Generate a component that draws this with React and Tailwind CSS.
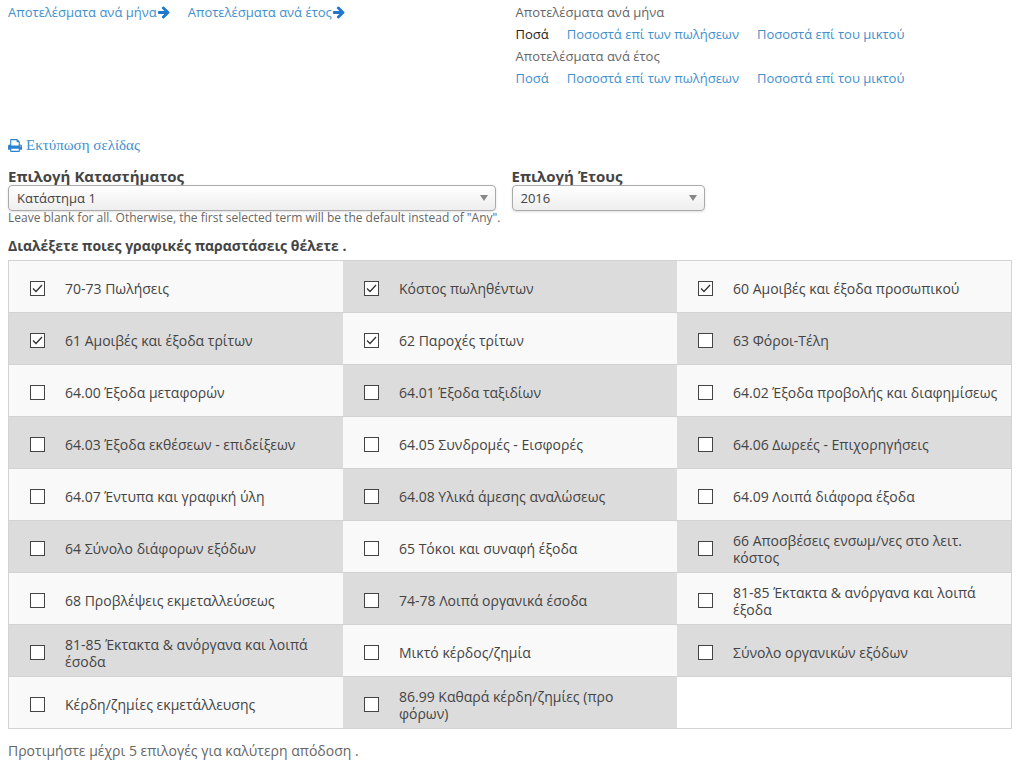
import { useCallback, useState } from "react";

const CHARTS = [
  "70-73 Πωλήσεις",
  "Κόστος πωληθέντων",
  "60 Αμοιβές και έξοδα προσωπικού",
  "61 Αμοιβές και έξοδα τρίτων",
  "62 Παροχές τρίτων",
  "63 Φόροι-Τέλη",
  "64.00 Έξοδα μεταφορών",
  "64.01 Έξοδα ταξιδίων",
  "64.02 Έξοδα προβολής και διαφημίσεως",
  "64.03 Έξοδα εκθέσεων - επιδείξεων",
  "64.05 Συνδρομές - Εισφορές",
  "64.06 Δωρεές - Επιχορηγήσεις",
  "64.07 Έντυπα και γραφική ύλη",
  "64.08 Υλικά άμεσης αναλώσεως",
  "64.09 Λοιπά διάφορα έξοδα",
  "64 Σύνολο διάφορων εξόδων",
  "65 Τόκοι και συναφή έξοδα",
  "66 Αποσβέσεις ενσωμ/νες στο λειτ. κόστος",
  "68 Προβλέψεις εκμεταλλεύσεως",
  "74-78 Λοιπά οργανικά έσοδα",
  "81-85 Έκτακτα & ανόργανα και λοιπά έξοδα",
  "81-85 Έκτακτα & ανόργανα και λοιπά έσοδα",
  "Μικτό κέρδος/ζημία",
  "Σύνολο οργανικών εξόδων",
  "Κέρδη/ζημίες εκμετάλλευσης",
  "86.99 Καθαρά κέρδη/ζημίες (προ\nφόρων)",
];

const MODES = ["Ποσά", "Ποσοστά επί των πωλήσεων", "Ποσοστά επί του μικτού"];

function ArrowRight() {
  return (
    <svg viewBox="0 0 1536 1792" className="h-[14px] w-3 fill-[#1f78cc]" aria-hidden="true">
      <path d="M1472 960q0 54-37 91l-651 651q-39 37-91 37-51 0-90-37l-75-75q-38-38-38-91t38-91l293-293h-704q-52 0-84.5-37.5t-32.5-90.5v-128q0-53 32.5-90.5t84.5-37.5h704l-293-294q-38-36-38-90t38-90l75-75q38-38 90-38 53 0 91 38l651 651q37 35 37 90z" />
    </svg>
  );
}

function PrintIcon() {
  return (
    <svg viewBox="0 0 1664 1792" className="h-[15px] w-[14px] fill-[#2b82d0]" aria-hidden="true">
      <path d="M384 1536h896v-256h-896v256zM384 896h896v-384h-160q-40 0-68-28t-28-68v-160h-640v640zM1536 960q0-26-19-45t-45-19-45 19-19 45 19 45 45 19 45-19 19-45zM1664 960v416q0 13-9.5 22.5t-22.5 9.5h-224v160q0 40-28 68t-68 28h-960q-40 0-68-28t-28-68v-160h-224q-13 0-22.5-9.5t-9.5-22.5v-416q0-79 56.5-135.5t135.5-56.5h64v-544q0-40 28-68t68-28h672q40 0 88 20t76 48l152 152q28 28 48 76t20 88v256h64q79 0 135.5 56.5t56.5 135.5z" />
    </svg>
  );
}

function ModeLinks({ active }) {
  return (
    <nav className="flex gap-[18px]">
      {MODES.map((m) => (
        <a key={m} href="#" className={m === active ? "text-[#222222]" : "text-[#428fce]"}>
          {m}
        </a>
      ))}
    </nav>
  );
}

function SelectField({ id, label, options, className }) {
  return (
    <div className={className}>
      <label htmlFor={id} className="block text-[15px] leading-[18px] font-bold text-[#444444]">
        {label}
      </label>
      <div className="relative">
        <select
          id={id}
          className="block h-[26px] w-full appearance-none rounded border border-[#aaaaaa] bg-linear-to-b from-white to-[#eeeeee] px-2 pt-px text-[13px] text-[#444444] shadow-sm"
        >
          {options.map((o) => (
            <option key={o}>{o}</option>
          ))}
        </select>
        <svg viewBox="0 0 8 6" className="pointer-events-none absolute top-[10px] right-2 h-[6px] w-2 fill-[#888888]" aria-hidden="true">
          <path d="M0 0h8L4 6z" />
        </svg>
      </div>
    </div>
  );
}

export default function App() {
  const [selected, setSelected] = useState([0, 1, 2, 3, 4]);

  const toggle = useCallback((i) => {
    setSelected((s) => (s.includes(i) ? s.filter((v) => v !== i) : [...s, i]));
  }, []);

  return (
    <main className="bg-white px-2 font-['Open_Sans','Noto_Sans',sans-serif] text-[13px] text-[#666666]">
      <header className="flex pt-px leading-[22px]">
        <div className="flex w-1/2 items-start gap-[18px]">
          <a href="#" className="flex items-center gap-px text-[#428fce]">
            Αποτελέσματα ανά μήνα <ArrowRight />
          </a>
          <a href="#" className="flex items-center gap-px text-[#428fce]">
            Αποτελέσματα ανά έτος <ArrowRight />
          </a>
        </div>
        <div className="w-1/2 pl-1">
          <p>Αποτελέσματα ανά μήνα</p>
          <ModeLinks active="Ποσά" />
          <p>Αποτελέσματα ανά έτος</p>
          <ModeLinks />
        </div>
      </header>

      <a href="#" className="mt-11 flex items-center gap-1 font-['Liberation_Serif',serif] text-[15px] leading-6 text-[#428fce]">
        <PrintIcon />
        Εκτύπωση σελίδας
      </a>

      <div className="mt-[10px] flex">
        <div className="w-1/2">
          <SelectField id="store" label="Επιλογή Καταστήματος" options={["Κατάστημα 1"]} className="pr-4" />
          <p className="text-[12px] leading-[14px]">
            Leave blank for all. Otherwise, the first selected term will be the default instead of "Any".
          </p>
        </div>
        <SelectField id="year" label="Επιλογή Έτους" options={["2016"]} className="w-[193px]" />
      </div>

      <fieldset className="mt-[7px] mr-[3px]">
        <legend className="py-1 text-[14px] leading-5 font-bold text-[#444444]">
          Διαλέξετε ποιες γραφικές παραστάσεις θέλετε .
        </legend>
        <div className="grid grid-cols-3 border-x border-t border-[#d3d3d3]">
          {CHARTS.map((name, i) => (
            <label
              key={name}
              className={`flex h-[52px] items-center gap-5 border-b border-[#d3d3d3] pt-1 pr-2 pl-[21px] text-[14px] leading-[17px] whitespace-pre-line text-[#444444] ${
                i % 2 ? "bg-[#dcdcdc]" : "bg-[#f9f9f9]"
              }`}
            >
              <span className="relative flex shrink-0">
                <input
                  type="checkbox"
                  checked={selected.includes(i)}
                  onChange={() => toggle(i)}
                  className="peer size-[15px] appearance-none border border-[#444444] bg-white"
                />
                <svg
                  viewBox="0 0 15 15"
                  className="pointer-events-none invisible absolute inset-0 size-[15px] fill-none stroke-[#333333] peer-checked:visible"
                  aria-hidden="true"
                >
                  <path d="M3 7.5l3 3L12 4" strokeWidth="1.3" />
                </svg>
              </span>
              {name}
            </label>
          ))}
          <div className="border-b border-[#d3d3d3]" />
        </div>
      </fieldset>

      <p className="mt-[11px] text-[14px] leading-[22px]">Προτιμήστε μέχρι 5 επιλογές για καλύτερη απόδοση .</p>
    </main>
  );
}
